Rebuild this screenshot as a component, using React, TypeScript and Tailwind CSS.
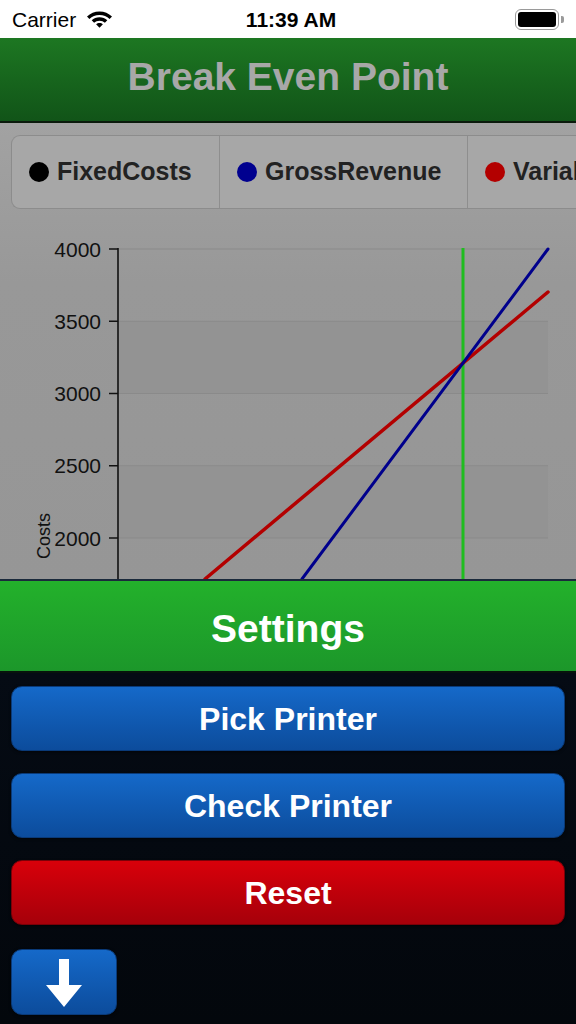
import React from "react";

const FONT = { fontFamily: '"Liberation Sans", Arial, Helvetica, sans-serif' };

function StatusBar() {
  return (
    <div className="relative flex h-[38px] items-center bg-white px-3 text-black">
      <span className="text-[21px] leading-none">Carrier</span>
      <svg className="ml-[10px]" width="27" height="20" viewBox="0 0 27 20" aria-hidden="true">
        <path d="M13.5 2.5C8.6 2.5 4.3 4.4 1 7.5l2.4 2.5c2.6-2.5 6.2-4 10.1-4s7.5 1.5 10.1 4L26 7.5C22.7 4.4 18.4 2.5 13.5 2.5z" fill="#000" />
        <path d="M13.5 8.2c-3 0-5.8 1.2-7.8 3.1l2.4 2.5c1.4-1.3 3.3-2.1 5.4-2.1s4 .8 5.4 2.1l2.4-2.5c-2-1.9-4.8-3.1-7.8-3.1z" fill="#000" />
        <path d="M13.5 13.9c-1.3 0-2.5.5-3.4 1.3l3.4 3.6 3.4-3.6c-.9-.8-2.1-1.3-3.4-1.3z" fill="#000" />
      </svg>
      <span className="absolute left-0 right-0 text-center text-[21px] font-bold leading-none">
        <span className="ml-[6px]">11:39 AM</span>
      </span>
      <div className="ml-auto flex items-center">
        <div className="flex h-[21px] w-[44px] items-center rounded-[6px] border-[1.5px] border-[#9a9a9a] p-[2px]">
          <div className="h-full w-full rounded-[3px] bg-black" />
        </div>
        <div className="ml-[2px] h-[7px] w-[3px] rounded-r-[2px] bg-[#9a9a9a]" />
      </div>
    </div>
  );
}

// legend is a horizontal strip that runs off the right edge, as on the device
const LEGEND = [
  { name: "FixedCosts", color: "#000000", w: "w-[207px]" },
  { name: "GrossRevenue", color: "#00008f", w: "w-[248px]" },
  { name: "VariableCosts", color: "#b30000", w: "w-[220px]" },
];

function Legend() {
  return (
    <div className="pl-[11px] pt-[12px]">
      <div className="flex h-[74px] overflow-hidden rounded-l-[9px] border border-r-0 border-[#8c8c8c] bg-[#a7a7a7]">
        {LEGEND.map((item, i) => (
          <div
            key={item.name}
            className={`flex shrink-0 items-center pl-[17px] ${item.w} ${i > 0 ? "border-l border-[#8e8e8e]" : ""}`}
          >
            <span className="h-[20px] w-[20px] shrink-0 rounded-full" style={{ backgroundColor: item.color }} />
            <span className="ml-[8px] whitespace-nowrap text-[25px] font-bold text-[#222222]">{item.name}</span>
          </div>
        ))}
      </div>
    </div>
  );
}

const TICKS = [
  { label: "4000", y: 40 },
  { label: "3500", y: 112.25 },
  { label: "3000", y: 184.5 },
  { label: "2500", y: 256.75 },
  { label: "2000", y: 329 },
];

function Chart() {
  return (
    <svg width="576" height="370" viewBox="0 0 576 370" className="block" style={FONT}>
      <rect x="118" y="112.25" width="430" height="72.25" fill="#939393" />
      <rect x="118" y="256.75" width="430" height="72.25" fill="#939393" />
      {TICKS.map((t) => (
        <g key={t.label}>
          <line x1="118" x2="548" y1={t.y} y2={t.y} stroke="#8a8a8a" strokeWidth="1.2" />
          <line x1="109" x2="118" y1={t.y} y2={t.y} stroke="#111" strokeWidth="1.5" />
          <text x="101" y={t.y + 7.5} textAnchor="end" fontSize="21" fill="#111">
            {t.label}
          </text>
        </g>
      ))}
      <line x1="118" x2="118" y1="39" y2="370" stroke="#111" strokeWidth="1.6" />
      <text x="50" y="327" fontSize="18" fill="#111" textAnchor="middle" transform="rotate(-90 50 327)">
        Costs
      </text>
      <line x1="463" x2="463" y1="39" y2="370" stroke="#1fbd1f" strokeWidth="3" />
      <line x1="205" y1="370" x2="548" y2="83" stroke="#b30000" strokeWidth="3.5" strokeLinecap="round" />
      <line x1="302" y1="370" x2="548" y2="40" stroke="#00008c" strokeWidth="3" strokeLinecap="round" />
    </svg>
  );
}

function ActionButton({ label, tone }: { label: string; tone: "blue" | "red" }) {
  const colors =
    tone === "blue"
      ? "bg-gradient-to-b from-[#1569c9] to-[#0c4c9c] border-[#0a3a78]"
      : "bg-gradient-to-b from-[#d8000a] to-[#a6000a] border-[#7a0008]";
  return (
    <button
      className={`flex h-[65px] w-full items-center justify-center rounded-[11px] border text-[32px] font-bold text-white shadow-[0_1px_3px_rgba(0,0,0,0.6)] ${colors}`}
    >
      {label}
    </button>
  );
}

export default function App() {
  return (
    <div className="flex h-[1024px] w-[576px] flex-col overflow-hidden bg-black" style={FONT}>
      <StatusBar />
      <header className="flex h-[85px] items-center justify-center border-b-2 border-[#0b1a0c] bg-gradient-to-b from-[#1d7722] to-[#115418]">
        <h1 className="pb-[4px] text-[39px] font-bold text-[#a8a8a8]">Break Even Point</h1>
      </header>
      <section className="flex h-[456px] flex-col bg-gradient-to-b from-[#a2a2a2] via-[#989898] via-35% to-[#969696]">
        <Legend />
        <Chart />
      </section>
      <div className="flex h-[94px] items-center justify-center border-t-2 border-b-2 border-t-[#1b2a3c] border-b-[#07140c] bg-gradient-to-b from-[#23b12b] to-[#1c972a]">
        <span className="pt-[6px] text-[39px] font-bold text-white">Settings</span>
      </div>
      <div className="flex flex-1 flex-col gap-[22px] bg-gradient-to-b from-[#050b14] to-[#03070c] px-[11px] pt-[13px]">
        <ActionButton label="Pick Printer" tone="blue" />
        <ActionButton label="Check Printer" tone="blue" />
        <ActionButton label="Reset" tone="red" />
        <button className="mt-[2px] flex h-[66px] w-[106px] items-end justify-center rounded-[11px] border border-[#0a3a78] bg-gradient-to-b from-[#1569c9] to-[#0c4c9c] pb-[5px] shadow-[0_1px_3px_rgba(0,0,0,0.6)]">
          <svg width="40" height="50" viewBox="0 0 40 50" aria-hidden="true">
            <path d="M15 0h10v26h13L20 48 2 26h13z" fill="#fff" />
          </svg>
        </button>
      </div>
    </div>
  );
}
